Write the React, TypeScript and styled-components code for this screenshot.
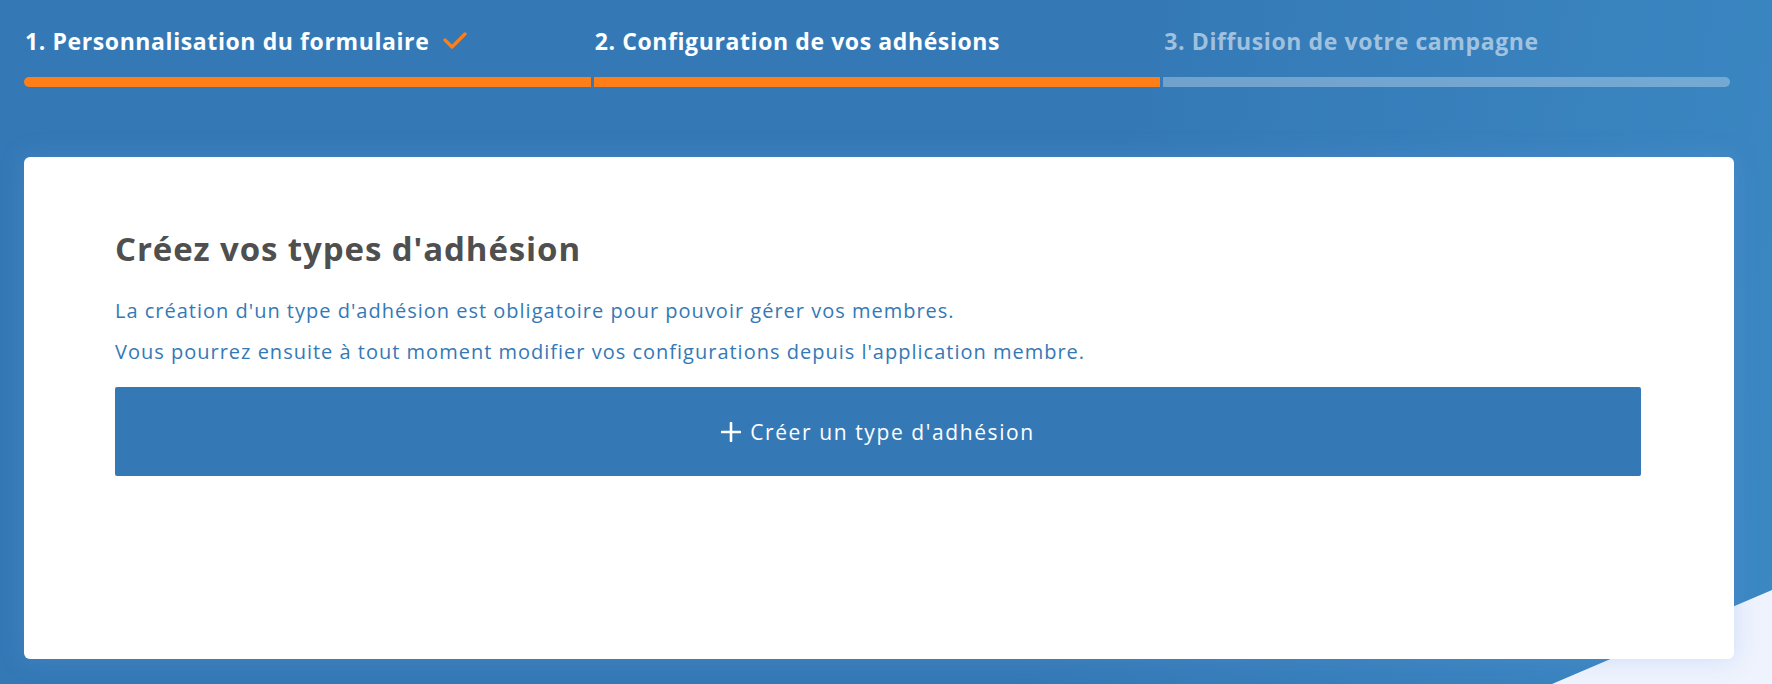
import styled, { createGlobalStyle } from 'styled-components'

const GlobalStyle = createGlobalStyle`
  html, body {
    margin: 0;
    padding: 0;
  }
  body {
    font-family: 'Open Sans', 'Noto Sans', sans-serif;
  }
`

const Page = styled.div`
  position: relative;
  width: 1772px;
  height: 684px;
  overflow: hidden;
  background: linear-gradient(100deg, #3479b6 0%, #3479b6 60%, #3b88c3 100%);
  padding: 27px 38px 0 24px;
  box-sizing: border-box;

  &::after {
    content: '';
    position: absolute;
    inset: 0;
    background: #eef3fd;
    clip-path: polygon(1552px 684px, 1772px 590px, 1772px 684px);
  }
`

const Content = styled.div`
  position: relative;
  z-index: 1;
`

const Steps = styled.div`
  display: grid;
  grid-template-columns: repeat(3, 1fr);
  column-gap: 3px;
  padding-right: 4px;
`

const Step = styled.div`
  display: flex;
  flex-direction: column;
`

const StepLabel = styled.div<{ $muted?: boolean }>`
  display: flex;
  align-items: center;
  gap: 14px;
  height: 28px;
  padding-left: 1px;
  font-size: 23px;
  font-weight: 700;
  letter-spacing: 0.6px;
  color: ${(p) => (p.$muted ? 'rgba(255, 255, 255, 0.55)' : '#ffffff')};
`

const Bar = styled.div<{ $done?: boolean; $pos: 'first' | 'mid' | 'last' }>`
  margin-top: 22px;
  height: 10px;
  background: ${(p) => (p.$done ? '#ff7e17' : 'rgba(255, 255, 255, 0.3)')};
  border-radius: ${(p) =>
    p.$pos === 'first' ? '5px 0 0 5px' : p.$pos === 'last' ? '0 5px 5px 0' : '0'};
`

const Card = styled.div`
  margin-top: 70px;
  height: 502px;
  background: #ffffff;
  border-radius: 6px;
  box-shadow: 0 0 24px rgba(120, 160, 230, 0.25);
  padding: 72px 93px 0 91px;
  box-sizing: border-box;
`

const Heading = styled.h2`
  margin: 0 0 21px;
  font-size: 33px;
  line-height: 40px;
  font-weight: 700;
  letter-spacing: 0.9px;
  color: #4f4f4f;
`

const Paragraph = styled.p`
  margin: 0;
  font-size: 20px;
  line-height: 41px;
  font-weight: 400;
  letter-spacing: 1px;
  color: #3479b6;
`

const CreateButton = styled.button`
  margin-top: 15px;
  width: 100%;
  height: 89px;
  border: none;
  border-radius: 2px;
  background: #3479b6;
  color: #ffffff;
  font-family: 'Open Sans', 'Noto Sans', sans-serif;
  font-size: 21px;
  letter-spacing: 1.6px;
  display: flex;
  align-items: center;
  justify-content: center;
  gap: 9px;
  cursor: pointer;
`

const CheckIcon = () => (
  <svg width="24" height="18" viewBox="0 0 24 18" fill="none">
    <path d="M2 8 L9 15 L22 2" stroke="#ff7e17" strokeWidth="3.2" strokeLinecap="round" strokeLinejoin="round" />
  </svg>
)

const PlusIcon = () => (
  <svg width="20" height="20" viewBox="0 0 20 20" fill="none">
    <path d="M10 1 V19 M1 10 H19" stroke="#ffffff" strokeWidth="2.6" strokeLinecap="round" />
  </svg>
)

const App = () => {
  return (
    <>
      <GlobalStyle />
      <Page>
        <Content>
          <Steps>
            <Step>
              <StepLabel>
                1. Personnalisation du formulaire
                <CheckIcon />
              </StepLabel>
              <Bar $done $pos="first" />
            </Step>
            <Step>
              <StepLabel>2. Configuration de vos adhésions</StepLabel>
              <Bar $done $pos="mid" />
            </Step>
            <Step>
              <StepLabel $muted>3. Diffusion de votre campagne</StepLabel>
              <Bar $pos="last" />
            </Step>
          </Steps>
          <Card>
            <Heading>Créez vos types d'adhésion</Heading>
            <Paragraph>La création d'un type d'adhésion est obligatoire pour pouvoir gérer vos membres.</Paragraph>
            <Paragraph>
              Vous pourrez ensuite à tout moment modifier vos configurations depuis l'application membre.
            </Paragraph>
            <CreateButton>
              <PlusIcon />
              Créer un type d'adhésion
            </CreateButton>
          </Card>
        </Content>
      </Page>
    </>
  )
}

export default App
